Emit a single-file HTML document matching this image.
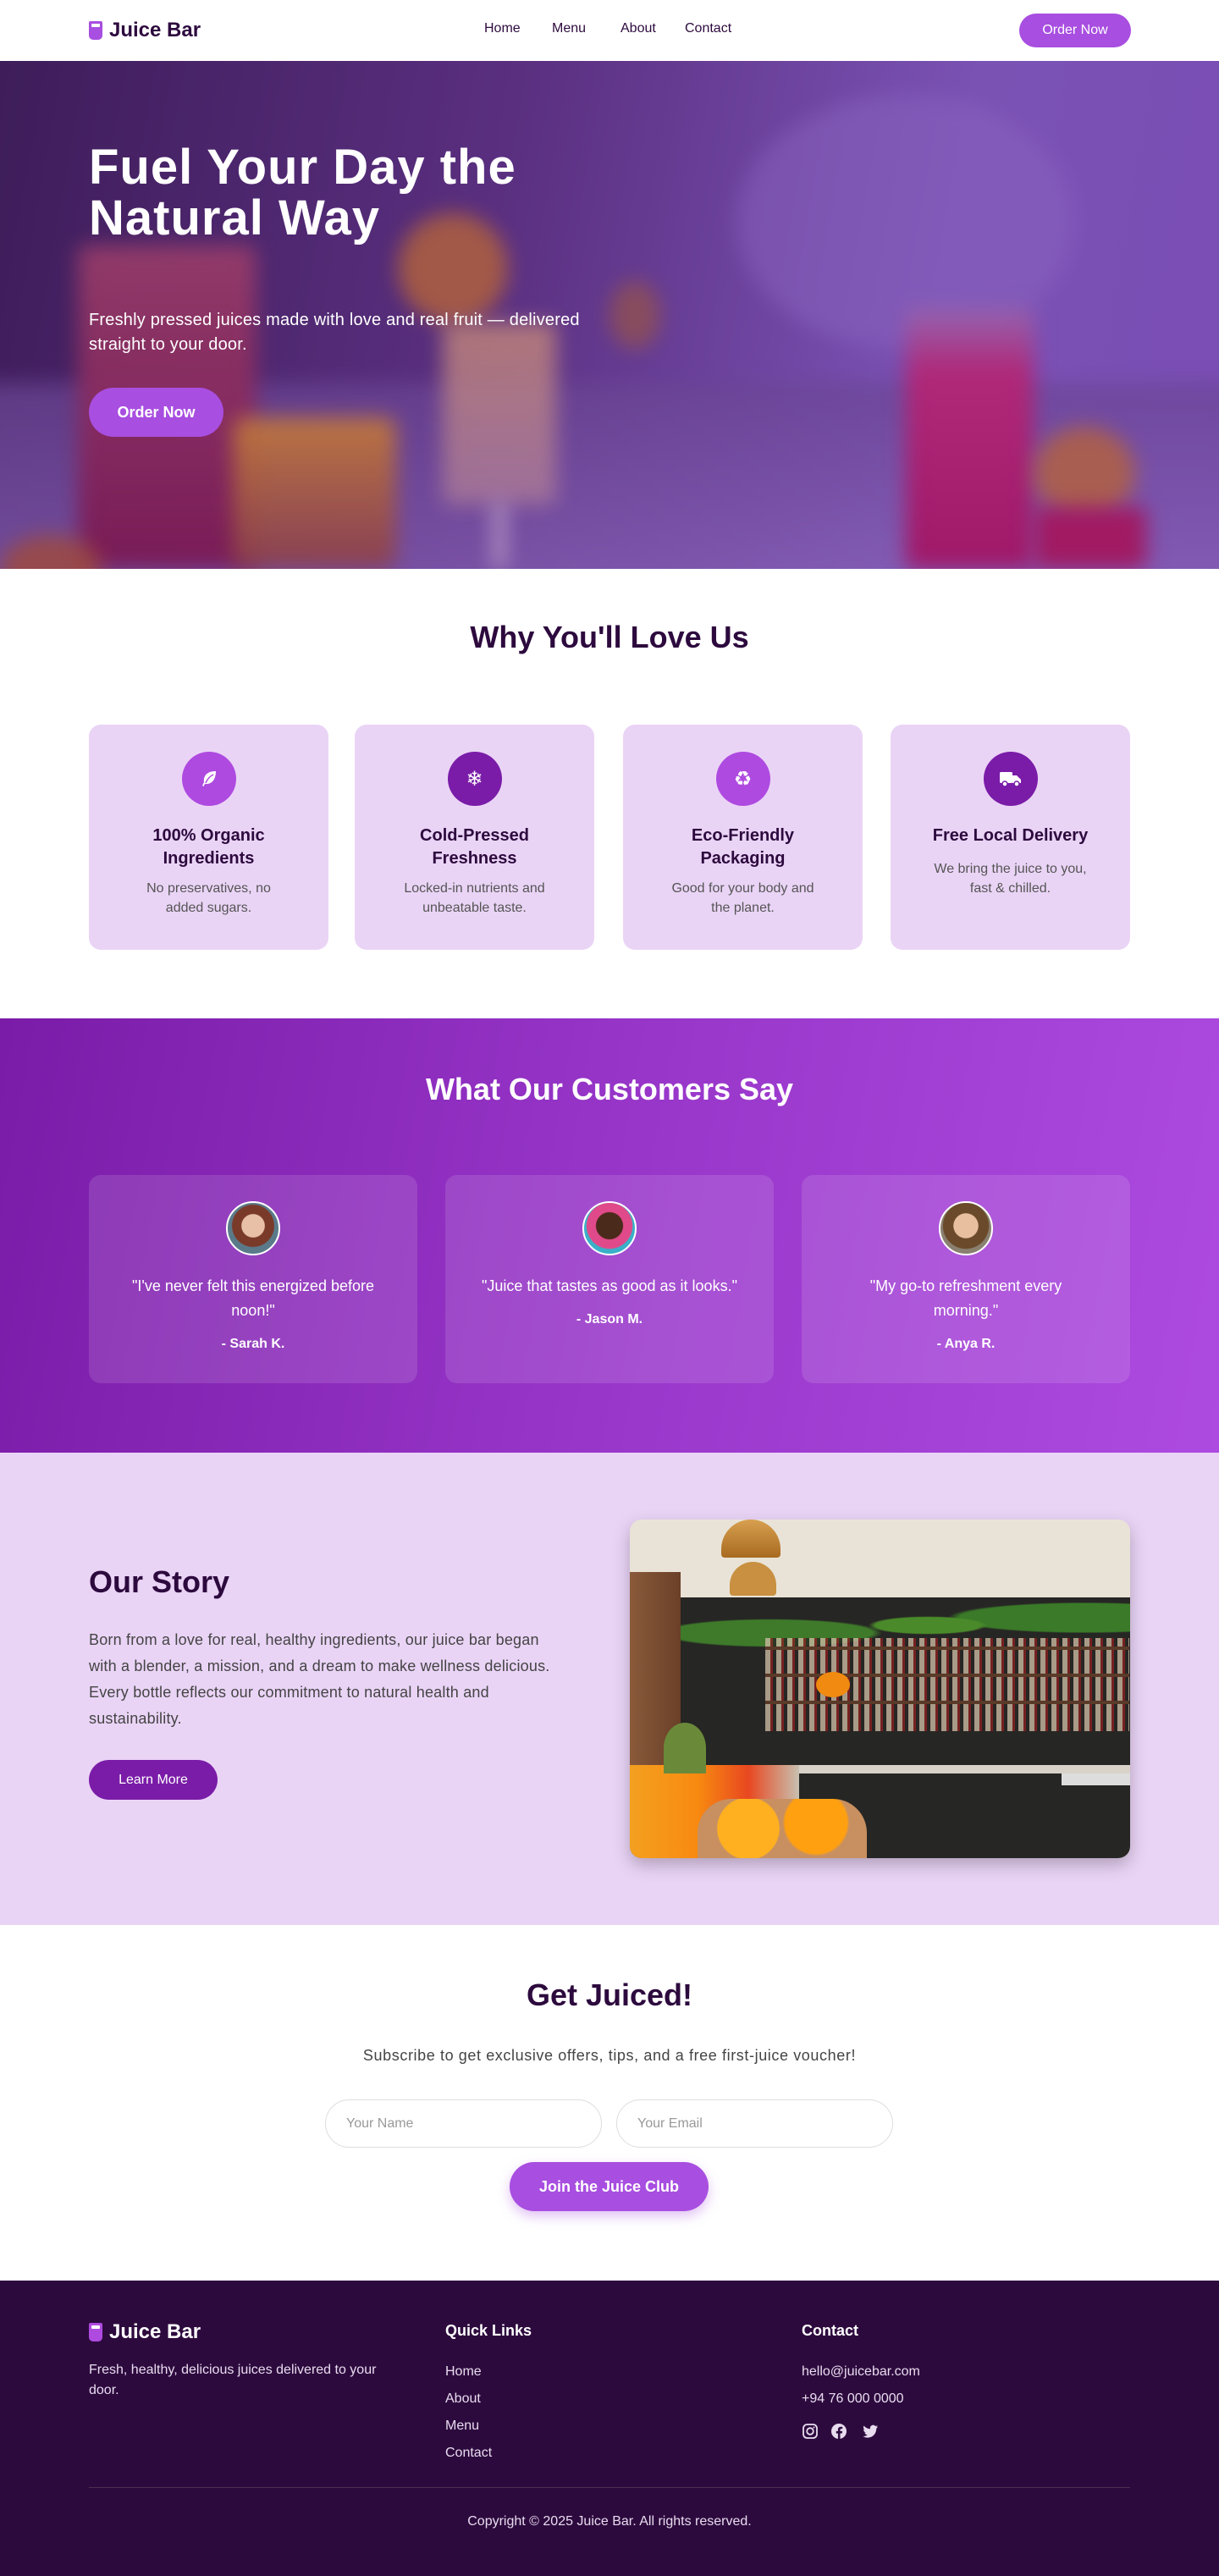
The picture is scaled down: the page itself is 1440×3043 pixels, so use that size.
<!DOCTYPE html>
<html><head><meta charset="utf-8"><style>
*{margin:0;padding:0;box-sizing:border-box}
body{width:1440px;font-family:"Liberation Sans",sans-serif;color:#2d0a3e;background:#fff}
.nav{height:72px;display:flex;align-items:center;position:relative;background:#fff}
.logo{position:absolute;left:105px;top:22px;display:flex;align-items:center;font-weight:700;font-size:24px;color:#2d0a3e}
.cup{width:16px;height:22px;background:#a84ee0;border-radius:2px 2px 5px 5px;margin-right:8px;position:relative}
.cup:after{content:"";position:absolute;left:3px;top:3px;width:10px;height:4px;background:#fff;border-radius:1px}
.nl{position:absolute;top:25px;font-size:16px;color:#2d0a3e}
.obtn{position:absolute;left:1204px;top:16px;width:132px;height:40px;border-radius:20px;background:#a84ee0;color:#fff;font-size:16px;display:flex;align-items:center;justify-content:center}
.hero{position:relative;height:600px;overflow:hidden;background:linear-gradient(100deg,#3e1d5a 0%,#5a2f80 40%,#7a52b4 75%,#7a4db5 100%)}
.hero .b{position:absolute;filter:blur(12px)}
.hero h1{position:absolute;left:105px;top:96px;font-size:58px;line-height:60px;color:#fff;font-weight:700;letter-spacing:1px}
.hero p{position:absolute;left:105px;top:292px;font-size:20px;line-height:29px;color:#fff;width:630px;letter-spacing:0.2px}
.hbtn{position:absolute;left:105px;top:386px;width:159px;height:58px;border-radius:29px;background:#a84ee0;color:#fff;font-weight:700;font-size:18px;display:flex;align-items:center;justify-content:center}
h2{font-size:36px;font-weight:700;text-align:center}
.why{height:531px;position:relative}
.card{position:absolute;top:184px;width:283px;height:266px;background:#ead4f6;border-radius:14px;text-align:center}
.ic{width:64px;height:64px;border-radius:50%;margin:32px auto 0;display:flex;align-items:center;justify-content:center;color:#fff;font-size:24px}
.card h3{font-size:20px;line-height:27px;margin-top:22px;font-weight:700}
.card p{font-size:16px;line-height:23px;color:#555;margin:10px 50px 0}
.test{height:513px;position:relative;background:linear-gradient(100deg,#7a1ca8 0%,#9a38cc 55%,#ad4ae0 100%)}
.tc{position:absolute;top:185px;width:388px;height:246px;background:rgba(255,255,255,0.12);border-radius:14px;text-align:center;color:#fff}
.av{width:64px;height:64px;border-radius:50%;margin:31px auto 0;border:2px solid #fff}
.tc p{font-size:18px;line-height:29px;margin:22px 42px 0}
.tc b{display:block;font-size:16px;margin-top:16px}
.story{height:558px;background:#ead4f6;position:relative}
.img{position:absolute;left:744px;top:79px;width:591px;height:400px;border-radius:14px;overflow:hidden;box-shadow:0 8px 20px rgba(0,0,0,0.25);background:#e9e3d7}
.img div{position:absolute}
.join{height:420px;position:relative;text-align:center}
.inp{position:absolute;top:206px;width:327px;height:57px;border:1px solid #ddd;border-radius:29px;font-size:16px;color:#999;text-align:left;padding:19px 24px}
footer{height:349px;background:#2d0a3e;color:#fff;position:relative}
footer .s{position:absolute;font-size:16px;color:#e8dcef}
</style></head><body>
<div class="nav">
<div class="logo"><div class="cup"></div>Juice Bar</div>
<span class="nl" style="left:572px">Home</span><span class="nl" style="left:652px">Menu</span><span class="nl" style="left:733px">About</span><span class="nl" style="left:809px">Contact</span>
<div class="obtn">Order Now</div>
</div>
<div class="hero">
<div class="b" style="left:-40px;top:380px;width:1520px;height:260px;background:linear-gradient(180deg,#6a4594,#8a63b8);opacity:.7"></div>
<div class="b" style="left:870px;top:40px;width:400px;height:300px;border-radius:50%;background:#8a64c0;opacity:.5"></div>
<div class="b" style="left:720px;top:260px;width:60px;height:80px;border-radius:50%;background:#a0583c;opacity:.6"></div>
<div class="b" style="left:92px;top:218px;width:211px;height:382px;background:linear-gradient(180deg,#9a3e6a,#7a1650);border-radius:10px;opacity:.9"></div>
<div class="b" style="left:275px;top:421px;width:193px;height:179px;background:linear-gradient(180deg,#c47a3a,#8a3e4c);border-radius:14px;opacity:.9"></div>
<div class="b" style="left:470px;top:180px;width:130px;height:130px;border-radius:50%;background:#b5643a;opacity:.8"></div>
<div class="b" style="left:523px;top:309px;width:134px;height:215px;background:linear-gradient(180deg,#c48878,#a8789a);border-radius:8px;opacity:.8"></div>
<div class="b" style="left:583px;top:520px;width:14px;height:80px;background:#b89ac4"></div>
<div class="b" style="left:1070px;top:292px;width:151px;height:308px;background:linear-gradient(180deg,#9464b0 0%,#b02878 25%,#a01868 100%);border-radius:8px"></div>
<div class="b" style="left:1221px;top:432px;width:120px;height:110px;border-radius:50%;background:#b5623c;opacity:.8"></div>
<div class="b" style="left:1221px;top:527px;width:133px;height:73px;background:#a11a62;border-radius:8px"></div>
<div class="b" style="left:0;top:560px;width:120px;height:80px;border-radius:50%;background:#a04a3a;opacity:.8"></div>
<h1>Fuel Your Day the<br>Natural Way</h1>
<p>Freshly pressed juices made with love and real fruit — delivered straight to your door.</p>
<div class="hbtn">Order Now</div>
</div>
<div class="why">
<h2 style="position:absolute;top:60px;width:100%">Why You'll Love Us</h2>
<div class="card" style="left:105px"><div class="ic" style="background:#ae4ae0"><svg width="24" height="24" viewBox="0 0 24 24"><path d="M20 3C10 3 5 8 6 16L4 20l1.5 1L7 18c8 1 13-5 13-15z" fill="#fff"/><path d="M8 17c2-5 5-8 9-10" stroke="#ae4ae0" stroke-width="1.5" fill="none"/></svg></div><h3>100% Organic<br>Ingredients</h3><p>No preservatives, no added sugars.</p></div>
<div class="card" style="left:419px"><div class="ic" style="background:#7a1ca8">❄</div><h3>Cold-Pressed<br>Freshness</h3><p>Locked-in nutrients and unbeatable taste.</p></div>
<div class="card" style="left:736px"><div class="ic" style="background:#ae4ae0">♻</div><h3>Eco-Friendly<br>Packaging</h3><p>Good for your body and the planet.</p></div>
<div class="card" style="left:1052px"><div class="ic" style="background:#7a1ca8"><svg width="28" height="22" viewBox="0 0 28 22"><rect x="1" y="3" width="15" height="13" rx="1.5" fill="#fff"/><path d="M16 7h5l5 5v4H16z" fill="#fff"/><circle cx="7" cy="17" r="3" fill="#fff" stroke="#7a1ca8" stroke-width="1.5"/><circle cx="21" cy="17" r="3" fill="#fff" stroke="#7a1ca8" stroke-width="1.5"/></svg></div><h3>Free Local Delivery</h3><p style="margin:14px 40px 0">We bring the juice to you, fast &amp; chilled.</p></div>
</div>
<div class="test">
<h2 style="position:absolute;top:63px;width:100%;color:#fff">What Our Customers Say</h2>
<div class="tc" style="left:105px"><div class="av" style="background:radial-gradient(circle at 50% 45%,#e8c0a8 0 30%,#7a3a2a 32% 55%,#5a7a8a 57%)"></div><p>"I've never felt this energized before noon!"</p><b>- Sarah K.</b></div>
<div class="tc" style="left:526px"><div class="av" style="background:radial-gradient(circle at 50% 45%,#4a2a1a 0 35%,#e04a8a 37% 60%,#3ab0c8 62%)"></div><p>"Juice that tastes as good as it looks."</p><b>- Jason M.</b></div>
<div class="tc" style="left:947px"><div class="av" style="background:radial-gradient(circle at 50% 45%,#e8c0a0 0 32%,#6a4a2a 34% 60%,#8a8070 62%)"></div><p>"My go-to refreshment every morning."</p><b>- Anya R.</b></div>
</div>
<div class="story">
<h2 style="position:absolute;left:105px;top:132px;text-align:left">Our Story</h2>
<p style="position:absolute;left:105px;top:206px;width:565px;font-size:18px;line-height:31px;color:#444;letter-spacing:0.2px">Born from a love for real, healthy ingredients, our juice bar began with a blender, a mission, and a dream to make wellness delicious. Every bottle reflects our commitment to natural health and sustainability.</p>
<div style="position:absolute;left:105px;top:363px;width:152px;height:47px;border-radius:24px;background:#7a1ca8;color:#fff;font-size:16px;display:flex;align-items:center;justify-content:center">Learn More</div>
<div class="img">
<div style="left:0;top:62px;width:60px;height:338px;background:linear-gradient(90deg,#8a5a3a,#6a4028)"></div>
<div style="left:60px;top:92px;width:531px;height:308px;background:#262624"></div>
<div style="left:60px;top:80px;width:531px;height:90px;background:radial-gradient(ellipse at 20% 60%,#3e7a2a 0 20%,transparent 22%),radial-gradient(ellipse at 55% 50%,#4a8a2a 0 15%,transparent 17%),radial-gradient(ellipse at 90% 40%,#3a7a28 0 22%,transparent 24%)"></div>
<div style="left:160px;top:140px;width:430px;height:110px;background:repeating-linear-gradient(90deg,#c8b8a0 0 6px,#8a2020 6px 9px,#262624 9px 13px);opacity:.8"></div>
<div style="left:160px;top:150px;width:430px;height:4px;background:#5a3a28;box-shadow:0 32px 0 #5a3a28,0 64px 0 #5a3a28"></div>
<div style="left:60px;top:290px;width:531px;height:10px;background:#d8d2c8"></div>
<div style="left:510px;top:300px;width:81px;height:14px;background:#ddd"></div>
<div style="left:108px;top:0;width:70px;height:45px;border-radius:35px 35px 4px 4px;background:linear-gradient(#d8a050,#a86a20)"></div>
<div style="left:118px;top:50px;width:55px;height:40px;border-radius:28px 28px 4px 4px;background:#c89040"></div>
<div style="left:0;top:290px;width:200px;height:110px;background:linear-gradient(90deg,#f4a020,#f88a10 40%,#e84820 70%,#c8c0b0)"></div>
<div style="left:40px;top:240px;width:50px;height:60px;background:#6a8a3a;border-radius:50% 50% 0 0"></div>
<div style="left:80px;top:330px;width:200px;height:70px;border-radius:40px 40px 0 0;background:radial-gradient(circle at 30% 50%,#ffb020 0 25%,transparent 26%),radial-gradient(circle at 70% 40%,#ffa010 0 25%,#c89060 27%)"></div>
<div style="left:220px;top:180px;width:40px;height:30px;border-radius:50%;background:#f08a10"></div>
</div>
</div>
<div class="join">
<h2 style="position:absolute;top:62px;width:100%">Get Juiced!</h2>
<p style="position:absolute;top:144px;width:100%;font-size:18px;color:#444;letter-spacing:0.6px">Subscribe to get exclusive offers, tips, and a free first-juice voucher!</p>
<div class="inp" style="left:384px">Your Name</div>
<div class="inp" style="left:728px">Your Email</div>
<div style="position:absolute;left:602px;top:280px;width:235px;height:58px;border-radius:29px;background:#a84ee0;color:#fff;font-weight:700;font-size:18px;display:flex;align-items:center;justify-content:center;box-shadow:0 6px 14px rgba(168,78,224,0.35)">Join the Juice Club</div>
</div>
<footer>
<div class="logo" style="top:47px;color:#fff"><div class="cup" style="background:#ae4ae0"></div>Juice Bar</div>
<div class="s" style="left:105px;top:94px;line-height:24px;font-size:16px;width:370px">Fresh, healthy, delicious juices delivered to your door.</div>
<div style="position:absolute;left:526px;top:49px;font-weight:700;font-size:18px">Quick Links</div>
<div class="s" style="left:526px;top:92px;line-height:32px">Home<br>About<br>Menu<br>Contact</div>
<div style="position:absolute;left:947px;top:49px;font-weight:700;font-size:18px">Contact</div>
<div class="s" style="left:947px;top:92px;line-height:32px">hello@juicebar.com<br>+94 76 000 0000</div>
<svg style="position:absolute;left:947px;top:168px" width="100" height="22" viewBox="0 0 100 22">
<rect x="2" y="2" width="16" height="16" rx="4.5" fill="none" stroke="#e8dcef" stroke-width="1.8"/><circle cx="10" cy="10" r="3.8" fill="none" stroke="#e8dcef" stroke-width="1.8"/><circle cx="14.5" cy="5.5" r="1" fill="#e8dcef"/>
<circle cx="44" cy="10" r="9" fill="#e8dcef"/><path d="M45.5 19v-6.5h2.2l.4-2.6h-2.6V8.4c0-.8.3-1.3 1.4-1.3h1.3V4.8c-.3 0-1.1-.1-2-.1-2 0-3.3 1.2-3.3 3.4v1.8h-2.2v2.6h2.2V19z" fill="#2d0a3e"/>
<path d="M90 4.5c-.7.3-1.4.5-2.1.6.8-.5 1.3-1.2 1.6-2-.7.4-1.5.7-2.3.9a3.6 3.6 0 0 0-6.2 3.3c-3-.2-5.7-1.6-7.5-3.8-1 1.7-.5 3.8 1.1 4.8-.6 0-1.2-.2-1.6-.4 0 1.8 1.2 3.3 2.9 3.6-.5.2-1.1.2-1.6.1.5 1.5 1.9 2.5 3.4 2.5A7.3 7.3 0 0 1 72.4 16c1.6 1 3.5 1.6 5.5 1.6 6.7 0 10.5-5.7 10.3-10.8.7-.6 1.3-1.2 1.8-2.3z" fill="#e8dcef"/>
</svg>
<div style="position:absolute;left:105px;top:244px;width:1230px;height:1px;background:#4a3050"></div>
<div class="s" style="left:0;width:1440px;text-align:center;top:276px;font-size:16px">Copyright © 2025 Juice Bar. All rights reserved.</div>
</footer>
</body></html>
